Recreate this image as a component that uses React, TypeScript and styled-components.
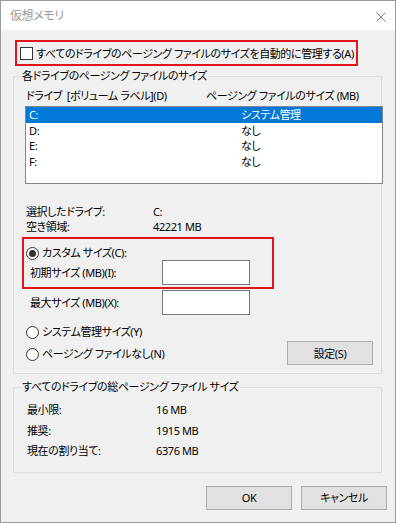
import React from "react";
import styled, { createGlobalStyle } from "styled-components";

const GlobalStyle = createGlobalStyle`
  html, body {
    margin: 0;
    padding: 0;
    background: #ffffff;
  }
  body {
    font-family: "Noto Sans", "Noto Sans CJK JP", sans-serif;
    font-size: 11px;
    letter-spacing: -0.4px;
    font-feature-settings: "palt";
    color: #000;
  }
  * { box-sizing: border-box; }
`;

const Window = styled.div`
  width: 396px;
  height: 523px;
  border: 1px solid #9a9a9a;
  display: flex;
  flex-direction: column;
  background: #f0f0f0;
  overflow: hidden;
`;

const TitleBar = styled.div`
  height: 29px;
  flex: none;
  background: #ffffff;
  display: flex;
  align-items: center;
  justify-content: space-between;
  padding: 0 9px 0 9px;
`;

const TitleText = styled.span`
  color: #999999;
  font-size: 12px;
  line-height: 16px;
`;

const CloseIcon = styled.svg`
  width: 10px;
  height: 10px;
  margin-top: 2px;
`;

const Body = styled.div`
  flex: 1;
  display: flex;
  flex-direction: column;
  padding: 10px 0 0 12px;
`;

const Highlight = styled.div`
  border: 2px solid #e3141c;
`;

const AutoRow = styled(Highlight)`
  margin-left: 2px;
  width: 343px;
  height: 26px;
  display: flex;
  align-items: center;
  gap: 3px;
  padding: 1px 0 0 3px;
`;

const Checkbox = styled.span`
  width: 13px;
  height: 13px;
  border: 1px solid #333333;
  background: #ffffff;
  flex: none;
`;

const Text = styled.span`
  line-height: 16px;
  white-space: nowrap;
`;

const GroupBox = styled.fieldset<{ $top: number; $bottom: number }>`
  margin: ${(p) => p.$top}px 0 0 0;
  padding: 0 0 ${(p) => p.$bottom}px 0;
  width: 369px;
  min-width: 0;
  border: 1px solid #dcdcdc;
  display: flex;
  flex-direction: column;
`;

const Legend = styled.legend`
  margin-left: 7px;
  padding: 0 1px;
  line-height: 16px;
  height: 16px;
  white-space: nowrap;
`;

const ListHeader = styled.div`
  height: 22px;
  padding: 2px 0 0 12px;
  display: grid;
  grid-template-columns: 180px 1fr;
  align-items: center;
`;

const ListBox = styled.div`
  margin-left: 11px;
  width: 358px;
  height: 78px;
  flex: none;
  border: 1px solid #828790;
  background: #ffffff;
  display: flex;
  flex-direction: column;
`;

const ListRow = styled.div<{ $selected?: boolean }>`
  height: 15.5px;
  padding-left: 3px;
  display: grid;
  grid-template-columns: 212px 1fr;
  align-items: center;
  line-height: 15px;
  background: ${(p) => (p.$selected ? "#0078d7" : "transparent")};
  color: ${(p) => (p.$selected ? "#ffffff" : "#000000")};
`;

const InfoGrid = styled.div<{ $top: number; $left: number; $col: number; $row: number }>`
  margin-top: ${(p) => p.$top}px;
  padding-left: ${(p) => p.$left}px;
  display: grid;
  grid-template-columns: ${(p) => p.$col}px 1fr;
  grid-auto-rows: ${(p) => p.$row}px;
  align-items: center;
  line-height: 14px;
`;

const CustomBox = styled(Highlight)`
  margin: 3px 0 0 8px;
  width: 252px;
  height: 52px;
  display: flex;
  flex-direction: column;
`;

const RadioRow = styled.div<{ $top: number; $left: number }>`
  margin: ${(p) => p.$top}px 0 0 ${(p) => p.$left}px;
  height: 14px;
  display: flex;
  align-items: center;
  gap: 3px;
`;

const Radio = styled.span<{ $checked?: boolean }>`
  width: 13px;
  height: 13px;
  border-radius: 50%;
  border: 1px solid #333333;
  background: #ffffff;
  flex: none;
  display: flex;
  align-items: center;
  justify-content: center;
  &::after {
    content: "";
    width: 7px;
    height: 7px;
    border-radius: 50%;
    background: ${(p) => (p.$checked ? "#333333" : "transparent")};
  }
`;

const SizeRow = styled.div<{ $top: number; $left: number }>`
  margin-top: ${(p) => p.$top}px;
  padding-left: ${(p) => p.$left}px;
  height: 25px;
  display: grid;
  grid-template-columns: 132px 88px;
  align-items: center;
`;

const TextInput = styled.div`
  height: 25px;
  background: #ffffff;
  border: 1px solid #7a7a7a;
`;

const OptionsArea = styled.div`
  margin-top: 10px;
  display: flex;
  align-items: flex-start;
`;

const RadioColumn = styled.div`
  display: flex;
  flex-direction: column;
`;

const Button = styled.div<{ $top?: number; $right?: number }>`
  width: 86px;
  height: 24px;
  margin-top: ${(p) => p.$top ?? 0}px;
  margin-right: ${(p) => p.$right ?? 0}px;
  background: #e1e1e1;
  border: 1px solid #adadad;
  display: flex;
  align-items: center;
  justify-content: center;
  line-height: 16px;
  padding-top: 1px;
`;

const SetButton = styled(Button)`
  margin-left: auto;
`;

const Footer = styled.div`
  margin-top: 13px;
  display: flex;
  justify-content: flex-end;
  gap: 9px;
  padding-right: 8px;
`;

const drives = [
  { name: "C:", size: "システム管理", selected: true },
  { name: "D:", size: "なし" },
  { name: "E:", size: "なし" },
  { name: "F:", size: "なし" },
];

const totals = [
  ["最小限:", "16 MB"],
  ["推奨:", "1915 MB"],
  ["現在の割り当て:", "6376 MB"],
];

export default function App() {
  return (
    <>
      <GlobalStyle />
      <Window>
        <TitleBar>
          <TitleText>仮想メモリ</TitleText>
          <CloseIcon viewBox="0 0 10 10">
            <path d="M0.5 0.5 L9.5 9.5 M9.5 0.5 L0.5 9.5" stroke="#808080" strokeWidth="1" fill="none" />
          </CloseIcon>
        </TitleBar>
        <Body>
          <AutoRow>
            <Checkbox />
            <Text>すべてのドライブのページング ファイルのサイズを自動的に管理する(A)</Text>
          </AutoRow>

          <GroupBox $top={2} $bottom={8}>
            <Legend>各ドライブのページング ファイルのサイズ</Legend>
            <ListHeader>
              <Text>ドライブ&nbsp;&nbsp;[ボリューム ラベル](D)</Text>
              <Text>ページング ファイルのサイズ (MB)</Text>
            </ListHeader>
            <ListBox>
              {drives.map((d) => (
                <ListRow key={d.name} $selected={d.selected}>
                  <span>{d.name}</span>
                  <span>{d.size}</span>
                </ListRow>
              ))}
            </ListBox>
            <InfoGrid $top={20} $left={12} $col={127} $row={15}>
              <span>選択したドライブ:</span>
              <span>C:</span>
              <span>空き領域:</span>
              <span>42221 MB</span>
            </InfoGrid>
            <CustomBox>
              <RadioRow $top={7} $left={2}>
                <Radio $checked />
                <Text>カスタム サイズ(C):</Text>
              </RadioRow>
              <SizeRow $top={0} $left={6}>
                <Text>初期サイズ (MB)(I):</Text>
                <TextInput />
              </SizeRow>
            </CustomBox>
            <SizeRow $top={1} $left={16}>
              <Text>最大サイズ (MB)(X):</Text>
              <TextInput />
            </SizeRow>
            <OptionsArea>
              <RadioColumn>
                <RadioRow $top={0} $left={12}>
                  <Radio />
                  <Text>システム管理サイズ(Y)</Text>
                </RadioRow>
                <RadioRow $top={8} $left={12}>
                  <Radio />
                  <Text>ページング ファイルなし(N)</Text>
                </RadioRow>
              </RadioColumn>
              <SetButton $top={16} $right={8}>設定(S)</SetButton>
            </OptionsArea>
          </GroupBox>

          <GroupBox $top={5} $bottom={10}>
            <Legend>すべてのドライブの総ページング ファイル サイズ</Legend>
            <InfoGrid $top={5} $left={13} $col={129} $row={20.5}>
              {totals.map(([k, v]) => (
                <React.Fragment key={k}>
                  <span>{k}</span>
                  <span>{v}</span>
                </React.Fragment>
              ))}
            </InfoGrid>
          </GroupBox>

          <Footer>
            <Button>OK</Button>
            <Button>キャンセル</Button>
          </Footer>
        </Body>
      </Window>
    </>
  );
}
